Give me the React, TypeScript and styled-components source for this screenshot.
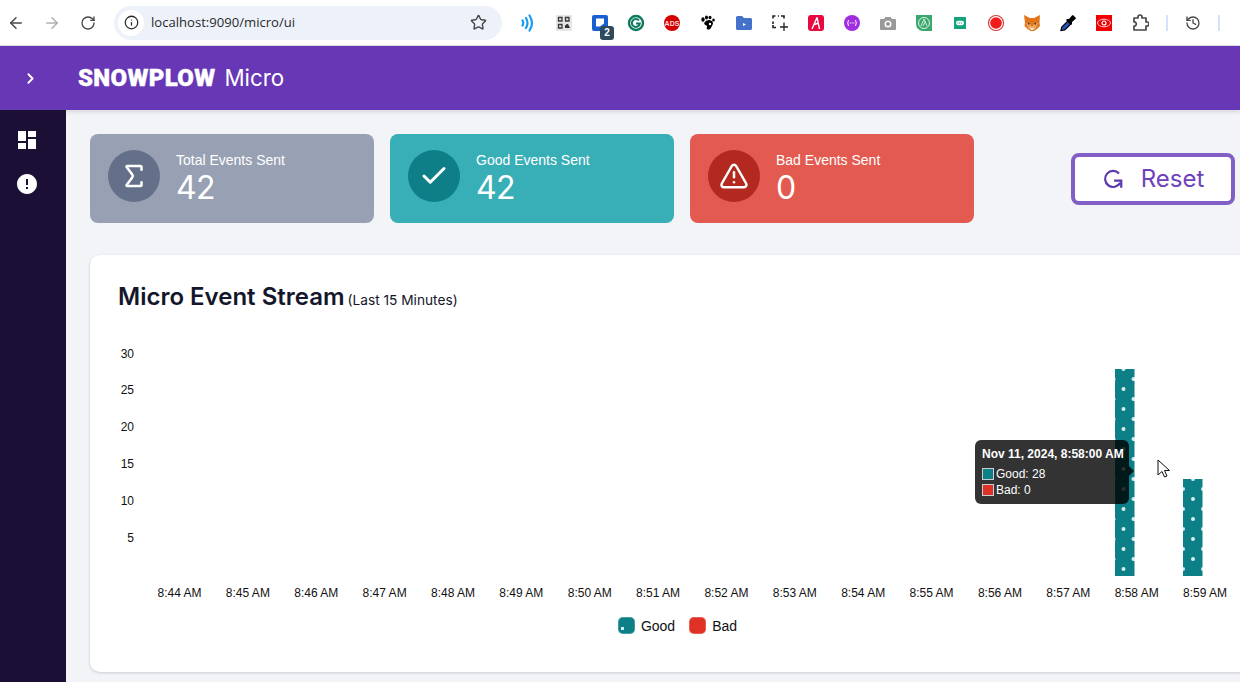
import React from 'react'
import styled, { createGlobalStyle } from 'styled-components'
import { ArrowLeft, ArrowRight, RotateCw, Info, Star, ChevronRight, Check, TriangleAlert, Sigma, History } from 'lucide-react'
import { MdDashboard, MdError } from 'react-icons/md'

const GlobalStyle = createGlobalStyle`
  html, body {
    margin: 0;
    padding: 0;
    height: 682px;
    overflow: hidden;
    background: #fff;
    font-family: 'Liberation Sans', Arial, sans-serif;
  }
`

const Page = styled.div`
  width: 1240px;
  height: 682px;
  display: flex;
  flex-direction: column;
  overflow: hidden;
`

const Chrome = styled.div`
  height: 45px;
  box-sizing: content-box;
  flex-shrink: 0;
  display: flex;
  align-items: center;
  background: #fff;
  border-bottom: 1px solid #dcdfe3;
`

const NavButton = styled.div<{ $muted?: boolean }>`
  width: 36px;
  height: 36px;
  flex-shrink: 0;
  display: flex;
  align-items: center;
  justify-content: center;
  color: ${(p) => (p.$muted ? '#b0b0b0' : '#474747')};
`

const NavGroup = styled.div`
  display: flex;
  align-items: center;
  margin-left: -2px;
  width: 116px;
  flex-shrink: 0;
`

const AddressBar = styled.div`
  width: 388px;
  height: 34px;
  flex-shrink: 0;
  box-sizing: border-box;
  padding: 0 15px 0 4px;
  border-radius: 17px;
  background: #edf2fa;
  display: flex;
  align-items: center;
  color: #474747;
`

const SiteInfo = styled.div`
  width: 26px;
  height: 26px;
  border-radius: 50%;
  background: #fff;
  display: flex;
  align-items: center;
  justify-content: center;
  color: #2b2b2b;
`

const Url = styled.span`
  flex: 1;
  margin-left: 7px;
  padding-bottom: 2px;
  font-family: 'Open Sans', sans-serif;
  font-size: 13.1px;
  color: #2a2a2a;
`

const Extensions = styled.div`
  display: flex;
  align-items: center;
  margin-left: 8px;
`

const ExtensionSlot = styled.div`
  position: relative;
  width: 36px;
  height: 36px;
  display: flex;
  align-items: center;
  justify-content: center;
`

const Badge = styled.span`
  position: absolute;
  left: 18px;
  top: 21px;
  width: 14px;
  height: 14px;
  border-radius: 3px;
  background: #2e4a5c;
  color: #fff;
  font-size: 10px;
  font-weight: 700;
  line-height: 14px;
  text-align: center;
`

const Separator = styled.div`
  width: 2px;
  height: 16px;
  background: #d3e3fd;
  flex-shrink: 0;
  margin-left: 8px;
`

const HistorySlot = styled.div`
  width: 50px;
  margin-right: -8px;
  display: flex;
  justify-content: center;
  color: #474747;
`

const Header = styled.header`
  position: relative;
  z-index: 2;
  height: 64px;
  flex-shrink: 0;
  display: flex;
  align-items: center;
  background: #6737b5;
  color: #fff;
  box-shadow: 0 2px 4px rgba(40, 30, 70, 0.14);
`

const HeaderToggle = styled.div`
  width: 78px;
  padding-left: 22px;
  box-sizing: border-box;
  display: flex;
  align-items: center;
`

const Brand = styled.div`
  font-family: Roboto, sans-serif;
  font-size: 24px;
  font-weight: 900;
  letter-spacing: 0.35px;
  -webkit-text-stroke: 0.4px #fff;
`

const BrandSuffix = styled.span`
  margin-left: 9px;
  font-family: Inter, sans-serif;
  font-weight: 400;
  letter-spacing: 0;
  font-size: 22.3px;
  -webkit-text-stroke: 0;
`

const Body = styled.div`
  flex: 1;
  display: flex;
  min-height: 0;
`

const Sidebar = styled.nav`
  width: 66px;
  box-sizing: border-box;
  flex-shrink: 0;
  background: #1c0f35;
  color: #fff;
  display: flex;
  flex-direction: column;
  align-items: center;
  padding: 17px 12px 0 0;
  gap: 18px;
`

const SideIcon = styled.div`
  height: 26px;
  display: flex;
  align-items: center;
  justify-content: center;
`

const Main = styled.main`
  flex: 1;
  min-width: 0;
  background: #f3f4f8;
  padding: 24px 0 0 24px;
`

const StatsRow = styled.div`
  display: flex;
  align-items: center;
  gap: 16px;
`

const StatCard = styled.div<{ $bg: string }>`
  width: 284px;
  height: 89px;
  box-sizing: border-box;
  padding: 16px 18px;
  display: flex;
  gap: 16px;
  border-radius: 8px;
  background: ${(p) => p.$bg};
  color: #fff;
`

const StatCircle = styled.div<{ $bg: string }>`
  width: 52px;
  height: 52px;
  border-radius: 50%;
  flex-shrink: 0;
  display: flex;
  align-items: center;
  justify-content: center;
  background: ${(p) => p.$bg};
`

const StatLabel = styled.div`
  font-size: 14px;
  line-height: 20px;
`

const StatValue = styled.div`
  font-family: Inter, sans-serif;
  font-size: 32px;
  line-height: 36px;
  letter-spacing: -0.7px;
`

const ResetButton = styled.button`
  margin-left: 81px;
  width: 164px;
  height: 52px;
  flex-shrink: 0;
  display: flex;
  align-items: center;
  justify-content: center;
  gap: 17px;
  border: 4px solid #825fc6;
  border-radius: 8px;
  background: #fff;
  color: #6f42bd;
  font-family: Inter, sans-serif;
  font-size: 24px;
  padding: 0;
`

const ChartCard = styled.section`
  position: relative;
  width: 1175px;
  height: 417px;
  box-sizing: border-box;
  margin-top: 32px;
  padding: 27px 0 0 28px;
  background: #fff;
  border-radius: 10px;
  box-shadow: 0 1px 3px rgba(30, 30, 60, 0.18);
`

const Title = styled.h2`
  margin: 0;
  font-family: Inter, sans-serif;
  font-size: 24px;
  line-height: 30px;
  font-weight: 600;
  color: #14172b;
`

const TitleNote = styled.span`
  margin-left: 3px;
  font-size: 13.7px;
  font-weight: 400;
  color: #14172b;
`

const ChartFrame = styled.div`
  margin: 25px 0 0 -28px;
  height: 270px;
`

const AxisText = styled.text`
  font-family: 'Liberation Sans', Arial, sans-serif;
  font-size: 12px;
  fill: #111;
`

const Legend = styled.div`
  display: flex;
  justify-content: center;
  align-items: center;
  gap: 14px;
  margin: 7px 0 0 -28px;
  font-size: 14px;
  color: #111;
`

const LegendItem = styled.div`
  display: flex;
  align-items: center;
  gap: 6px;
`

const LegendSwatch = styled.span<{ $bg: string }>`
  position: relative;
  width: 17px;
  height: 17px;
  border-radius: 5px;
  background: ${(p) => p.$bg};
  box-shadow: inset 0 0 0 1px rgba(255, 255, 255, 0.22);
`

const LegendDot = styled.span`
  position: absolute;
  left: 3px;
  bottom: 4px;
  width: 3px;
  height: 3px;
  background: #d7ecee;
`

const Tooltip = styled.div`
  position: absolute;
  left: 885px;
  top: 185px;
  width: 154px;
  height: 64px;
  box-sizing: border-box;
  padding: 6px 6px 6px 7px;
  border-radius: 6px;
  background: rgba(0, 0, 0, 0.8);
  color: #fff;
  font-size: 12px;
  line-height: 16px;
  white-space: nowrap;

  &::after {
    content: '';
    position: absolute;
    left: 100%;
    top: 26px;
    border: 5px solid transparent;
    border-left-color: rgba(0, 0, 0, 0.8);
  }
`

const TooltipTitle = styled.div`
  font-weight: 700;
  margin-bottom: 4px;
`

const TooltipRow = styled.div`
  display: flex;
  align-items: center;
  gap: 2px;
`

const TooltipSwatch = styled.span<{ $bg: string }>`
  width: 12px;
  height: 12px;
  box-sizing: border-box;
  border: 1px solid #c8d0d4;
  background: ${(p) => p.$bg};
`

const Cursor = styled.svg`
  position: absolute;
  left: 1067px;
  top: 204px;
`

const ChromeIcon = ({ children }: { children: React.ReactNode }) => (
  <svg width="18" height="18" viewBox="0 0 18 18">{children}</svg>
)

const extensionIcons: React.ReactNode[] = [
  <ChromeIcon>
    <path d="M3.500 6.500q1.500 2.500 0 5M7 4q3 5 0 10M10.500 1.500q5 7.500 0 15" fill="none" stroke="#1a9af0" strokeWidth="2.200" strokeLinecap="round" />
  </ChromeIcon>,
  <ChromeIcon>
    <rect x="1" y="1" width="16" height="16" fill="#e6e6e6" />
    <path d="M3.500 3.500h3.500v3.500H3.500zM10.500 3.500h3.500v3.500h-3.500zM3.500 10.500h3.500v3.500H3.500z" fill="none" stroke="#3a3a3a" strokeWidth="1.300" />
    <path d="M10 14a3 3 0 0 1 3-4l2 4z" fill="#333" />
  </ChromeIcon>,
  <ChromeIcon>
    <path d="M3 1h12a2 2 0 0 1 2 2v10l-6 4H3a2 2 0 0 1-2-2V3a2 2 0 0 1 2-2z" fill="#1a5fd0" />
    <path d="M5 4.500h8v5l-4 3H5z" fill="#fff" />
  </ChromeIcon>,
  <ChromeIcon>
    <circle cx="9" cy="9" r="7" fill="none" stroke="#0d7a5f" strokeWidth="2.400" />
    <path d="M12 6.500a4 4 0 1 0 .8 3H9" fill="none" stroke="#0d7a5f" strokeWidth="2" />
  </ChromeIcon>,
  <ChromeIcon>
    <circle cx="9" cy="9" r="8" fill="#d40000" />
    <text x="9" y="11.500" textAnchor="middle" fontSize="7" fontWeight="700" fontFamily="Liberation Sans" fill="#f8dcdc">ADS</text>
  </ChromeIcon>,
  <ChromeIcon>
    <path d="M5 9q3-4 7-2.500 3 1.500 1.500 4.500-1 1.500-1.500 3-2 2.500-4 1-1-1 0-2 .5-1-.5-1.500-2-.5-2.500-2.500z" fill="#000" />
    <ellipse cx="4" cy="5.500" rx="1.700" ry="2.200" fill="#000" />
    <ellipse cx="7.500" cy="3.500" rx="1.500" ry="2" fill="#000" />
    <ellipse cx="11" cy="3.500" rx="1.500" ry="1.800" fill="#000" />
    <ellipse cx="14.500" cy="6" rx="1.300" ry="1.600" fill="#000" />
    <circle cx="11" cy="10" r="1.200" fill="#fff" />
  </ChromeIcon>,
  <ChromeIcon>
    <path d="M1 3.500A1.500 1.500 0 0 1 2.500 2H7l2 2h6.500A1.500 1.500 0 0 1 17 5.500v9a1.500 1.500 0 0 1-1.500 1.500h-13A1.500 1.500 0 0 1 1 14.500z" fill="#4472ca" />
    <path d="M8 9l3 1.500L8 12z" fill="#fff" />
  </ChromeIcon>,
  <ChromeIcon>
    <path d="M4.500 2H2v2.500M2 7.500v2.500M10 2h3v2.500M2 11v2.500h3M7 2h1" fill="none" stroke="#222" strokeWidth="1.600" />
    <path d="M13 8.500V17M9 13h8" stroke="#222" strokeWidth="1.300" />
  </ChromeIcon>,
  <ChromeIcon>
    <rect x="1" y="1" width="16" height="16" rx="3" fill="#e8093f" />
    <path d="M10 3.500L5 15M10 3.500L12.500 15M7.500 10.500L11.500 9" fill="none" stroke="#fff" strokeWidth="1.400" />
  </ChromeIcon>,
  <ChromeIcon>
    <circle cx="9" cy="9" r="8" fill="#a02de0" />
    <path d="M5.500 6q-1.500 3 0 6M12.500 6q1.500 3 0 6" fill="none" stroke="#fff" strokeWidth="1" />
    <path d="M6.800 9h4.600" stroke="#fff" strokeWidth="1.200" strokeDasharray="1 .8" />
  </ChromeIcon>,
  <ChromeIcon>
    <path d="M2 5h3l1.500-2h5L13 5h3a1 1 0 0 1 1 1v9a1 1 0 0 1-1 1H2a1 1 0 0 1-1-1V6a1 1 0 0 1 1-1z" fill="#999" />
    <circle cx="9" cy="10" r="3.500" fill="#fff" />
    <circle cx="9" cy="10" r="2" fill="#999" />
  </ChromeIcon>,
  <ChromeIcon>
    <path d="M1 1h16v16H8a7 7 0 0 1-7-7z" fill="#3aa76d" />
    <circle cx="9" cy="9" r="5.500" fill="none" stroke="#dff3e7" strokeWidth="1" />
    <path d="M6 12l3-7 3 7M8 12l2.500-5" fill="none" stroke="#dff3e7" strokeWidth=".9" />
  </ChromeIcon>,
  <ChromeIcon>
    <rect x="3" y="3" width="12" height="12" fill="#14a37f" />
    <rect x="5" y="6.800" width="8" height="4.400" rx="2.200" fill="#fff" />
    <path d="M6.500 9h5" stroke="#14a37f" strokeWidth="1" strokeDasharray="1 .7" />
  </ChromeIcon>,
  <ChromeIcon>
    <circle cx="9" cy="9" r="7.500" fill="#fff" stroke="#d63a3a" strokeWidth="1.200" />
    <circle cx="9" cy="9" r="5.800" fill="#f01c1c" />
  </ChromeIcon>,
  <ChromeIcon>
    <path d="M1 1l6 3h4l6-3-.5 8 .5 3-3 3-3 2H7.500l-3-2-3-3 .5-3z" fill="#e2761b" />
    <path d="M3 9l4 1 2 3 2-3 4-1-2 5-2 2H7l-2-2z" fill="#f0a45c" />
    <path d="M7 13l2 1 2-1-1 3H8z" fill="#f3e3d0" />
    <path d="M5 8.500l2 1.500-2 .8zM13 8.500l-2 1.500 2 .8z" fill="#2b2b2b" />
  </ChromeIcon>,
  <ChromeIcon>
    <path d="M2 16.500l.8-3.500 6-6 3 3-6 6z" fill="#2a52be" stroke="#000" strokeWidth="1.200" />
    <path d="M8 5l2 0 3-3.500 1-.5 3 3-.5 1-3.500 3 0 2-1 1-5-5z" fill="#000" />
  </ChromeIcon>,
  <ChromeIcon>
    <rect x="1" y="1" width="16" height="16" fill="#f00000" />
    <ellipse cx="9" cy="9" rx="6.500" ry="3.800" fill="none" stroke="#fbd0d0" strokeWidth="1" />
    <circle cx="9" cy="9" r="2" fill="none" stroke="#fff" strokeWidth="1.200" />
  </ChromeIcon>,
  <ChromeIcon>
    <path d="M3 4h4V3a2 2 0 0 1 4 0v1h4v4h1a2 2 0 0 1 0 4h-1v4H3v-4h1a2.200 2.200 0 0 0 0-4H3z" fill="none" stroke="#474747" strokeWidth="1.700" strokeLinejoin="round" />
  </ChromeIcon>,
]

const yTicks = [
  { label: '30', y: 354 },
  { label: '25', y: 390 },
  { label: '20', y: 427 },
  { label: '15', y: 464 },
  { label: '10', y: 501 },
  { label: '5', y: 538 },
]

const minutes = Array.from({ length: 16 }, (_, i) => ({
  label: `8:${44 + i} AM`,
  x: 179.5 + i * 68.37,
}))

const CHART_TOP = 340

const bars = [
  { id: 'barA', x: 1115, top: 369, dotX: 8.5 },
  { id: 'barB', x: 1183, top: 479, dotX: 10 },
]

const BarPattern = ({ id, x, y, dotX }: { id: string; x: number; y: number; dotX: number }) => (
  <pattern id={id} patternUnits="userSpaceOnUse" x={x} y={y} width="20" height="20">
    <rect width="20" height="20" fill="#0c7f87" />
    <circle cx={dotX} cy="20" r="2" fill="#d7ecee" />
    <circle cx={dotX} cy="0" r="2" fill="#d7ecee" />
    <circle cx={dotX + 10} cy="10" r="2" fill="#d7ecee" />
    <circle cx={dotX - 10} cy="10" r="2" fill="#d7ecee" />
  </pattern>
)

const EventChart = () => (
  <svg width="1175" height="270" viewBox={`90 ${CHART_TOP} 1175 270`}>
    <defs>
      {bars.map((b) => (
        <BarPattern key={b.id} id={b.id} x={b.x} y={b.top} dotX={b.dotX} />
      ))}
    </defs>
    {yTicks.map((t) => (
      <AxisText key={t.label} x="134" y={t.y + 4} textAnchor="end">
        {t.label}
      </AxisText>
    ))}
    {minutes.map((m) => (
      <AxisText key={m.label} x={m.x} y="597" textAnchor="middle">
        {m.label}
      </AxisText>
    ))}
    {bars.map((b) => (
      <rect key={b.id} x={b.x} y={b.top} width="19.500" height={576 - b.top} fill={`url(#${b.id})`} />
    ))}
  </svg>
)

const ResetIcon = () => (
  <svg width="22" height="22" viewBox="0 0 20 20" fill="none" stroke="#5c37ad" strokeWidth="2">
    <path d="M15.500 5A7.300 7.300 0 1 0 16.500 13.500" />
    <path d="M11 11.500h6.500V18" />
  </svg>
)

const stats = [
  { label: 'Total Events Sent', value: 42, bg: '#98a1b3', circle: '#64708a', icon: <Sigma size={30} strokeWidth={2} /> },
  { label: 'Good Events Sent', value: 42, bg: '#38aeb7', circle: '#0e7f86', icon: <Check size={30} strokeWidth={2.4} /> },
  { label: 'Bad Events Sent', value: 0, bg: '#e35a50', circle: '#b3291f', icon: <TriangleAlert size={30} strokeWidth={2} /> },
]

const App: React.FC = () => (
  <Page>
    <GlobalStyle />
    <Chrome>
      <NavGroup>
        <NavButton><ArrowLeft size={18} /></NavButton>
        <NavButton $muted><ArrowRight size={18} /></NavButton>
        <NavButton><RotateCw size={16} /></NavButton>
      </NavGroup>
      <AddressBar>
        <SiteInfo><Info size={15} strokeWidth={2} /></SiteInfo>
        <Url>localhost:9090/micro/ui</Url>
        <Star size={17} />
      </AddressBar>
      <Extensions>
        {extensionIcons.map((icon, i) => (
          <ExtensionSlot key={i}>
            {icon}
            {i === 2 && <Badge>2</Badge>}
          </ExtensionSlot>
        ))}
        <Separator />
        <HistorySlot><History size={16} /></HistorySlot>
        <Separator />
      </Extensions>
    </Chrome>
    <Header>
      <HeaderToggle><ChevronRight size={17} strokeWidth={2.6} /></HeaderToggle>
      <Brand>
        SNOWPLOW<BrandSuffix>Micro</BrandSuffix>
      </Brand>
    </Header>
    <Body>
      <Sidebar>
        <SideIcon><MdDashboard size={24} /></SideIcon>
        <SideIcon><MdError size={24} /></SideIcon>
      </Sidebar>
      <Main>
        <StatsRow>
          {stats.map((s) => (
            <StatCard key={s.label} $bg={s.bg}>
              <StatCircle $bg={s.circle}>{s.icon}</StatCircle>
              <div>
                <StatLabel>{s.label}</StatLabel>
                <StatValue>{s.value}</StatValue>
              </div>
            </StatCard>
          ))}
          <ResetButton><ResetIcon />Reset</ResetButton>
        </StatsRow>
        <ChartCard>
          <Title>
            Micro Event Stream<TitleNote>(Last 15 Minutes)</TitleNote>
          </Title>
          <ChartFrame><EventChart /></ChartFrame>
          <Legend>
            <LegendItem>
              <LegendSwatch $bg="#0c7f87"><LegendDot /></LegendSwatch>Good
            </LegendItem>
            <LegendItem>
              <LegendSwatch $bg="#e03127" />Bad
            </LegendItem>
          </Legend>
          <Tooltip>
            <TooltipTitle>Nov 11, 2024, 8:58:00 AM</TooltipTitle>
            <TooltipRow><TooltipSwatch $bg="#0c7f87" />Good: 28</TooltipRow>
            <TooltipRow><TooltipSwatch $bg="#e03127" />Bad: 0</TooltipRow>
          </Tooltip>
          <Cursor width="14" height="20" viewBox="0 0 14 20">
            <path d="M1 1v15l4-3.500 2.500 5.500 2.500-1-2.500-5.500H12.500z" fill="#fff" stroke="#111" strokeWidth="1" />
          </Cursor>
        </ChartCard>
      </Main>
    </Body>
  </Page>
)

export default App
